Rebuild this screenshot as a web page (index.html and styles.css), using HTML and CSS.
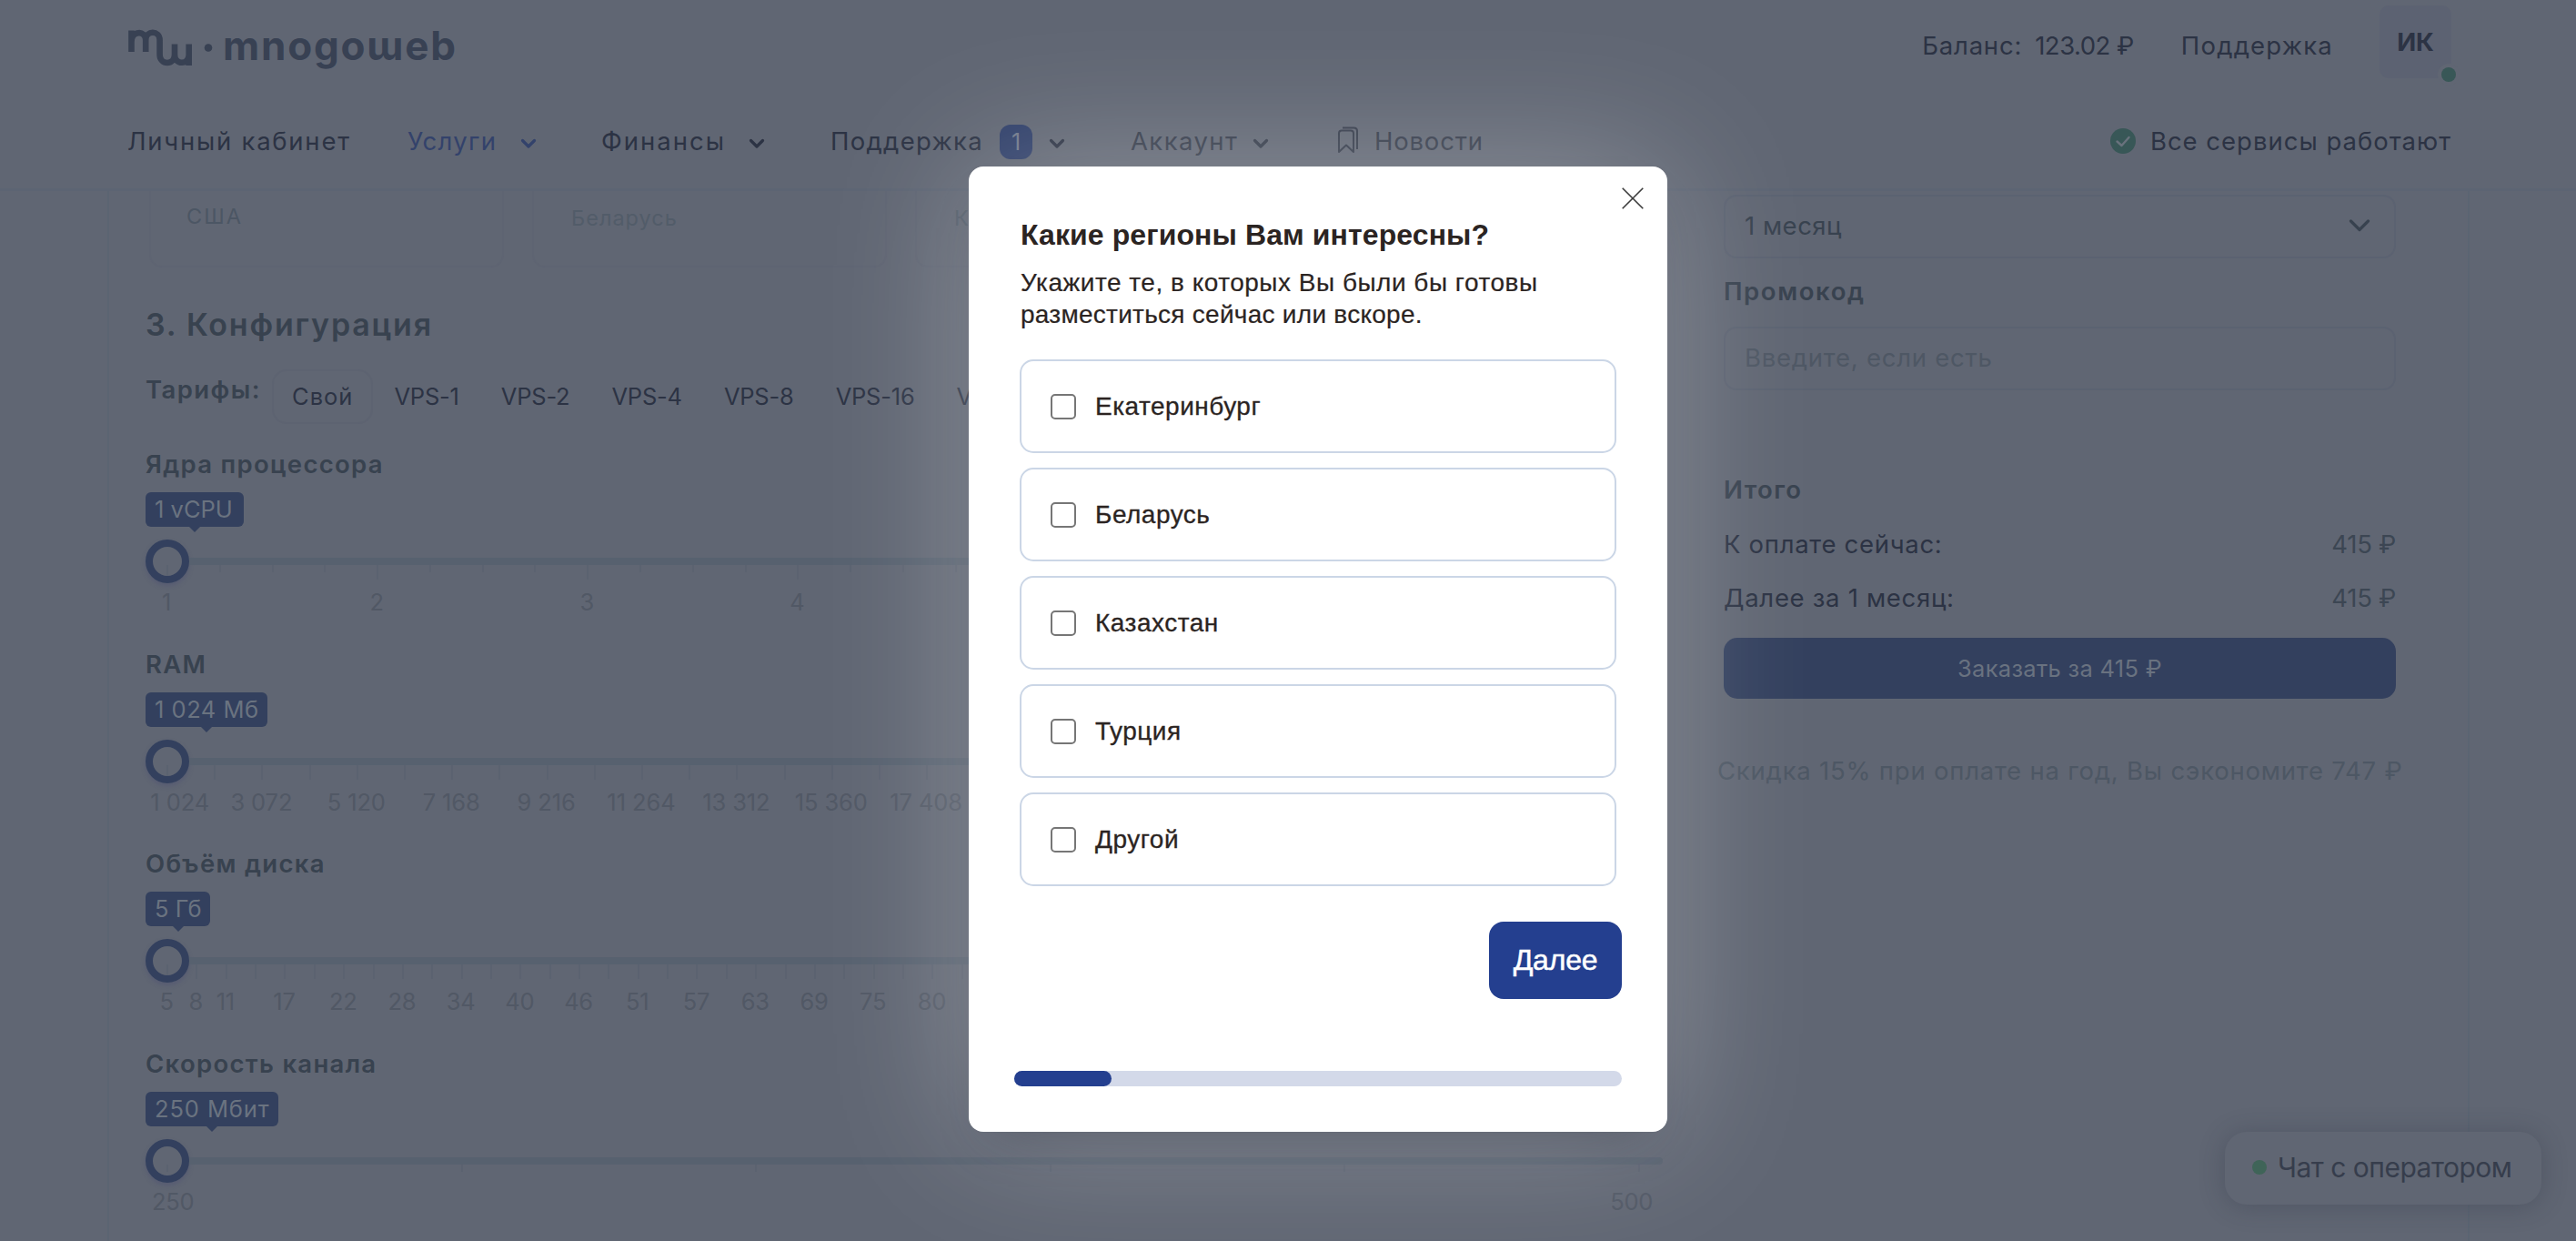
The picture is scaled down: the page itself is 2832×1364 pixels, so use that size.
FILE: index.html
```
<!DOCTYPE html>
<html lang="ru">
<head>
<meta charset="utf-8">
<title>mnogoweb</title>
<link rel="stylesheet" href="styles.css">
</head>
<body>
<header class="header">
  <div class="topbar">
    <a class="logo">
      <svg class="logo-mark" width="97" height="48" viewBox="138 28 97 48" fill="none" stroke="currentColor" stroke-width="6.6">
        <path d="M144.5 57V33.5M144.5 46C144.5 33.5 160.2 33 160.2 44V57M160.2 44C160.2 33 175.6 33 175.6 44V60C175.6 72 192 72 192 60V48.5M192 60C192 72 207.7 71.5 207.7 60M207.7 48.5V72"/>
        <circle cx="229" cy="52.5" r="4.3" fill="currentColor" stroke="none"/>
      </svg>
      <span class="logo-text">mnogoɯeb</span>
    </a>
    <div class="account">
      <span class="balance-label">Баланс:</span><span class="balance-value">123.02 ₽</span>
      <span class="support">Поддержка</span>
      <div class="avatar">ИК<i class="online"></i></div>
    </div>
  </div>
  <nav class="nav">
    <a class="nav-item home">Личный кабинет</a>
    <a class="nav-item services">Услуги <svg class="chev" viewBox="0 0 18 12"><path d="M2.5 2.5L9 9L15.5 2.5"/></svg></a>
    <a class="nav-item finance">Финансы <svg class="chev" viewBox="0 0 18 12"><path d="M2.5 2.5L9 9L15.5 2.5"/></svg></a>
    <a class="nav-item help">Поддержка <span class="badge">1</span><svg class="chev" viewBox="0 0 18 12"><path d="M2.5 2.5L9 9L15.5 2.5"/></svg></a>
    <a class="nav-item profile">Аккаунт <svg class="chev" viewBox="0 0 18 12"><path d="M2.5 2.5L9 9L15.5 2.5"/></svg></a>
    <a class="nav-item news"><svg class="bookmark" viewBox="0 0 24 30"><path d="M2 28V7.5Q2 4.500 5 4.5H15Q18 4.5 18 7.5V28L10 20.5ZM6 1.5H18.5Q22 1.5 22 5V25"/></svg>Новости</a>
    <div class="status"><svg class="check" viewBox="0 0 28 28"><circle cx="14" cy="14" r="14"/><path d="M7.5 14.5L12.5 19L20.5 10"/></svg>Все сервисы работают</div>
  </nav>
</header>

<main class="page">
  <section class="config">
    <div class="locations">
      <div class="location">США</div>
      <div class="location off">Беларусь</div>
      <div class="location off">К</div>
    </div>
    <h2 class="title">3. Конфигурация</h2>
    <div class="tariffs">
      <span class="tariffs-label">Тарифы:</span>
      <span class="tab active">Свой</span><span class="tab">VPS-1</span><span class="tab">VPS-2</span><span class="tab">VPS-4</span><span class="tab">VPS-8</span><span class="tab">VPS-16</span><span class="tab">VPS-32</span>
    </div>

    <div class="slider cpu">
      <h3 class="label">Ядра процессора</h3>
      <span class="tip">1 vCPU</span>
      <div class="rail"><i class="knob"></i><i class="track"></i></div>
      <div class="scale"><span>1</span><span>2</span><span>3</span><span>4</span></div>
    </div>
    <div class="slider ram">
      <h3 class="label">RAM</h3>
      <span class="tip">1 024 Мб</span>
      <div class="rail"><i class="knob"></i><i class="track"></i></div>
      <div class="scale"><span class="first">1 024</span><span>3 072</span><span>5 120</span><span>7 168</span><span>9 216</span><span>11 264</span><span>13 312</span><span>15 360</span><span>17 408</span></div>
    </div>
    <div class="slider disk">
      <h3 class="label">Объём диска</h3>
      <span class="tip">5 Гб</span>
      <div class="rail"><i class="knob"></i><i class="track"></i></div>
      <div class="scale"><span class="half">5</span><span class="half">8</span><span class="half">11</span><span>17</span><span>22</span><span>28</span><span>34</span><span>40</span><span>46</span><span>51</span><span>57</span><span>63</span><span>69</span><span>75</span><span>80</span></div>
    </div>
    <div class="slider net">
      <h3 class="label">Скорость канала</h3>
      <span class="tip">250 Мбит</span>
      <div class="rail"><i class="knob"></i><i class="track"></i></div>
      <div class="scale"><span>250</span><span>500</span></div>
    </div>
  </section>

  <aside class="order">
    <div class="field select"><span>1 месяц</span><svg class="arrow" viewBox="0 0 24 14"><path d="M2.5 2L12 11.5L21.5 2"/></svg></div>
    <h3 class="label promo">Промокод</h3>
    <div class="field placeholder">Введите, если есть</div>
    <h3 class="label total">Итого</h3>
    <div class="sum"><span>К оплате сейчас:</span><span class="price">415 ₽</span></div>
    <div class="sum"><span>Далее за 1 месяц:</span><span class="price">415 ₽</span></div>
    <div class="buy">Заказать за 415 ₽</div>
    <p class="discount">Скидка 15% при оплате на год, Вы сэкономите 747 ₽</p>
  </aside>
</main>

<div class="chat"><i class="dot"></i>Чат с оператором</div>

<div class="modal">
  <svg class="close" viewBox="0 0 24 24"><path d="M.7.7L23.3 23.3M23.3.7L.7 23.3"/></svg>
  <h1 class="question">Какие регионы Вам интересны?</h1>
  <p class="hint"><span class="hint-first">Укажите те, в которых Вы были бы готовы</span><br>разместиться сейчас или вскоре.</p>
  <div class="options">
    <label class="option"><i class="box"></i>Екатеринбург</label>
    <label class="option"><i class="box"></i>Беларусь</label>
    <label class="option"><i class="box"></i>Казахстан</label>
    <label class="option"><i class="box"></i>Турция</label>
    <label class="option"><i class="box"></i>Другой</label>
  </div>
  <div class="next">Далее</div>
  <div class="progress"><i class="progress-fill"></i></div>
</div>
</body>
</html>
```
FILE: styles.css
```
* { box-sizing: border-box; }
body {
  margin: 0;
  width: 2832px;
  height: 1364px;
  overflow: hidden;
  position: relative;
  background: #606673;
  color: #2c3344;
  font: 400 27.5px/34px "Inter", "Noto Sans", sans-serif;
  white-space: nowrap;
}
h1, h2, h3, p { margin: 0; }
i { display: block; }

/* header */
.header { height: 210px; padding: 0 137px 0 138px; border-bottom: 3px solid #5c6473; }
.topbar { height: 100px; display: flex; justify-content: space-between; align-items: center; }
.logo { display: flex; align-items: center; color: #384153; }
.logo-mark { display: block; margin-top: 4px; }
.logo-text { margin-left: 10px; font-size: 44px; font-weight: 700; letter-spacing: 1.8px; line-height: 60px; }
.account { display: flex; align-items: center; }
.balance-label { letter-spacing: .8px; margin-right: 14px; }
.balance-value { letter-spacing: -.5px; margin-right: 52px; }
.support { letter-spacing: 1.2px; margin-right: 51px; }
.avatar {
  position: relative; width: 79px; height: 80px; margin-top: -8px;
  border-radius: 10px; background: #5c6272;
  font-weight: 700; text-align: center; line-height: 80px;
}
.online { position: absolute; right: -5px; bottom: -4px; width: 16px; height: 16px; border-radius: 50%; background: #385757; box-shadow: 0 0 0 4px #606673; }

.nav { display: flex; align-items: center; height: 109px; padding-left: 2px; }
.nav-item { display: flex; align-items: center; }
.chev { width: 18px; height: 12px; margin-top: 6px; fill: none; stroke: currentColor; stroke-width: 3.2; stroke-linecap: round; stroke-linejoin: round; }
.home { width: 308px; letter-spacing: 1.75px; }
.services { width: 213px; letter-spacing: 1.3px; color: #33426b; }
.services .chev { margin-left: 26px; }
.finance { width: 252px; letter-spacing: 2px; }
.finance .chev { margin-left: 25px; }
.help { width: 330px; letter-spacing: 1.3px; }
.badge { width: 36px; height: 38px; margin: 3px 18px 0 18px; border-radius: 12px; background: #2f3f69; color: #707789; font-size: 25px; line-height: 38px; letter-spacing: 0; text-align: center; }
.profile { width: 227px; letter-spacing: 1.4px; color: #343b4a; }
.profile .chev { margin-left: 16px; }
.news { letter-spacing: .8px; color: #343b4a; }
.bookmark { width: 24px; height: 30px; margin: -1px 17px 0 0; fill: none; stroke: currentColor; stroke-width: 2; stroke-linejoin: round; }
.status { display: flex; align-items: center; margin-left: auto; letter-spacing: 1px; }
.check { width: 28px; height: 28px; margin-right: 16px; fill: #385757; }
.check path { fill: none; stroke: #69727d; stroke-width: 2.4; stroke-linecap: round; stroke-linejoin: round; }

/* page card */
.page { display: flex; justify-content: space-between; height: 1154px; margin: 0 117px 0 118px; padding: 0 79px 0 40px; border: solid #5b6472; border-width: 0 2px; }
.config { width: 1668px; }
.locations { display: flex; gap: 31px; padding-left: 4px; }
.location { width: 390px; height: 84px; padding: 11px 39px; border: solid #5e6472; border-width: 0 2px 2px; border-radius: 0 0 14px 14px; color: #4c5664; font-size: 23.5px; letter-spacing: 2px; }
.off { padding: 13px 41px; color: #525c69; letter-spacing: 1px; }
.title { margin-top: 38px; height: 50px; color: #38424f; font-size: 34px; font-weight: 600; line-height: 50px; letter-spacing: 1.8px; }
.tariffs { display: flex; height: 60px; margin: 24px 0; font-size: 25.5px; }
.tariffs-label { width: 139px; color: #38424f; font-size: 27.5px; font-weight: 600; line-height: 45px; letter-spacing: 1.4px; }
.tab { height: 60px; padding: 0 21px; line-height: 55px; letter-spacing: -.2px; border: 2px solid transparent; border-radius: 16px; }
.active { padding: 0 20px; border-color: #5d6371; letter-spacing: 1px; }

/* sliders */
.slider { height: 219.6px; }
.label { height: 40px; color: #38424f; font-size: 27.5px; font-weight: 600; line-height: 40px; letter-spacing: 1.3px; }
.tip { position: relative; display: block; width: max-content; height: 38px; margin: 11px 0 14px; padding: 0 10px; border-radius: 6px; background: #33405e; color: #6a7380; font-size: 25.5px; line-height: 38px; letter-spacing: .5px; }
.tip::after { content: ""; position: absolute; left: 50%; top: 38px; margin-left: -6px; border: 6px solid transparent; border-top-color: #33405e; border-bottom: 0; }
.cpu .tip { width: 108px; letter-spacing: 0; }
.ram .tip { width: 134px; }
.disk .tip { width: 71px; letter-spacing: 0; }
.net .tip { width: 146px; letter-spacing: .9px; }
.rail { display: flex; align-items: center; height: 48px; }
.knob { width: 48px; height: 48px; border: 8px solid #33405e; border-radius: 50%; box-shadow: 0 3px 5px rgba(70, 72, 115, .35); }
.track { flex: 1; height: 8px; border-radius: 0 4px 4px 0; background: #57616f; }
.scale { display: flex; height: 52px; margin-top: -20px; padding-top: 26px; color: #515865; font-size: 25.5px; line-height: 30px; letter-spacing: -.3px; background-repeat: no-repeat; }
.scale span { display: flex; flex: none; justify-content: center; }
.cpu .scale {
  margin-left: 23px;
  background-image: repeating-linear-gradient(90deg, #5b6270 0 2px, transparent 2px 231.14px), repeating-linear-gradient(90deg, #5b6270 0 2px, transparent 2px 57.785px);
  background-size: 1620px 16px, 1620px 8px;
}
.cpu .scale span { width: 231.14px; transform: translateX(-115.57px); }
.ram .scale { margin-left: 23px; background-image: repeating-linear-gradient(90deg, #5b6270 0 2px, transparent 2px 52.2px); background-size: 1620px 16px; }
.ram .scale span { width: 104.4px; transform: translateX(-52.2px); letter-spacing: -.1px; }
.ram .scale .first { transform: translateX(-37.5px); }
.disk .scale { margin-left: 23px; background-image: repeating-linear-gradient(90deg, #5b6270 0 2px, transparent 2px 32.36px); background-size: 1620px 16px; }
.disk .scale span { width: 64.72px; }
.disk .scale .half { width: 32.36px; transform: translateX(-16.18px); }
.net .scale { justify-content: space-between; margin-left: 7px; padding-right: 11px; background-image: repeating-linear-gradient(90deg, #5b6270 0 2px, transparent 2px 323.6px); background-position: 16px 0; background-size: 1620px 8px; }

/* order column */
.order { width: 739px; padding-top: 4px; }
.field { display: flex; align-items: center; justify-content: space-between; height: 70px; padding: 0 26px 2px 21px; border: 2px solid #5b6271; border-radius: 14px; color: #38424f; letter-spacing: .5px; }
.arrow { width: 24px; height: 14px; fill: none; stroke: currentColor; stroke-width: 3.2; stroke-linecap: round; stroke-linejoin: round; }
.promo { margin: 16px 0 19px; letter-spacing: 1.6px; }
.placeholder { color: #4e5764; letter-spacing: .75px; }
.total { margin: 89px 0 20px; letter-spacing: 1.4px; }
.sum { display: flex; justify-content: space-between; height: 59px; line-height: 40px; letter-spacing: .7px; }
.price { color: #3c4653; letter-spacing: -.3px; }
.buy { height: 67px; margin-top: 5px; border-radius: 15px; background: #33405e; color: #697280; font-size: 25.5px; line-height: 67px; letter-spacing: .3px; text-align: center; }
.discount { margin: 62px -7px 0; color: #4d5764; letter-spacing: .78px; }

.chat { position: absolute; left: 2446px; top: 1244px; display: flex; align-items: center; width: 348px; height: 80px; padding: 0 0 2px 30px; border-radius: 24px; background: #606673; color: #363d4c; font-size: 30px; letter-spacing: -.5px; box-shadow: 0 2px 28px rgba(40, 48, 62, .3); }
.dot { width: 16px; height: 16px; margin-right: 12px; border-radius: 50%; background: #3f6458; }

/* survey dialog */
.modal {
  position: absolute; left: 1065px; top: 183px; width: 768px; height: 1061px;
  padding: 60px 50px 0; border-radius: 16px; background: #fff; color: #2b2422;
  font-family: "Liberation Sans", Arial, sans-serif;
  box-shadow: 0 25px 50px -25px rgba(40, 45, 60, .4), 0 0 160px rgba(255, 255, 255, .31);
}
.close { position: absolute; right: 26px; top: 23px; width: 24px; height: 24px; fill: none; stroke: #3c3c3c; stroke-width: 1.6; }
.question { height: 35px; margin-left: 7px; font-size: 32px; line-height: 30px; letter-spacing: .1px; }
.hint { margin: 15px 0 0 7px; font-size: 28px; line-height: 35px; letter-spacing: .27px; -webkit-text-stroke: .2px #2b2422; }
.hint-first { letter-spacing: .51px; }
.options { display: flex; flex-direction: column; gap: 16px; margin: 32px 6px 0; }
.option { display: flex; align-items: center; height: 103px; padding-left: 32px; border: 2px solid #cbd6e6; border-radius: 15px; font-size: 28px; letter-spacing: .5px; -webkit-text-stroke: .3px #2b2422; }
.box { width: 28px; height: 28px; margin-right: 21px; border: 2px solid #767676; border-radius: 5px; }
.next { width: 146px; height: 85px; margin: 39px 0 0 auto; border-radius: 16px; background: #243f8f; color: #fff; font-size: 32px; line-height: 85px; letter-spacing: -.2px; text-align: center; -webkit-text-stroke: .5px #fff; }
.progress { height: 17px; margin-top: 79px; border-radius: 8.5px; background: #d3d9e9; }
.progress-fill { width: 16%; height: 17px; border-radius: 8.5px; background: #243f8f; }
```
